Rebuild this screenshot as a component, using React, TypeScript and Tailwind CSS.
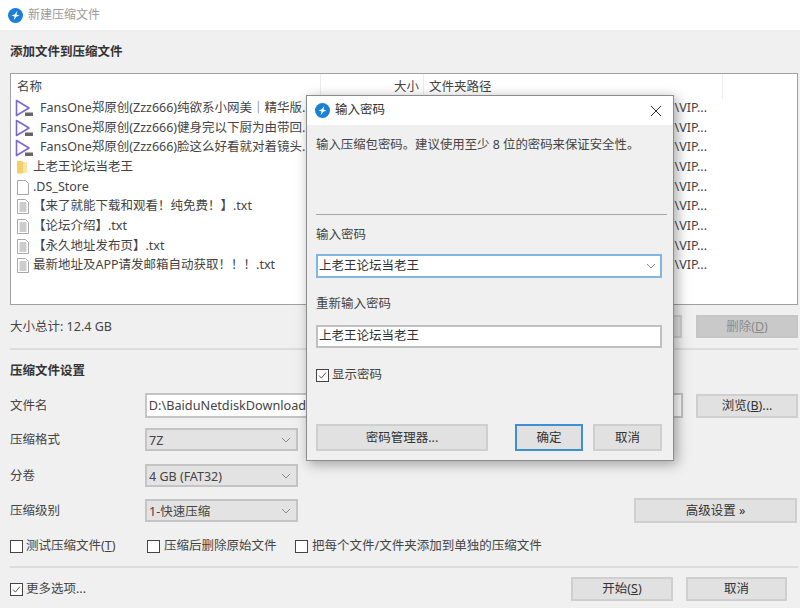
import type { ReactNode } from "react"

const files = [
  { type: "video", name: "FansOne郑原创(Zzz666)纯欲系小网美｜精华版." },
  { type: "video", name: "FansOne郑原创(Zzz666)健身完以下厨为由带回." },
  { type: "video", name: "FansOne郑原创(Zzz666)脸这么好看就对着镜头." },
  { type: "folder", name: "上老王论坛当老王" },
  { type: "blank", name: ".DS_Store" },
  { type: "text", name: "【来了就能下载和观看！纯免费！】.txt" },
  { type: "text", name: "【论坛介绍】.txt" },
  { type: "text", name: "【永久地址发布页】.txt" },
  { type: "text", name: "最新地址及APP请发邮箱自动获取！！！.txt" },
]

function Logo() {
  return (
    <svg width="15" height="15" viewBox="0 0 16 16" className="shrink-0">
      <circle cx="8" cy="8" r="8" fill="#1b7fd4" />
      <path d="M10 2.8 9 6.9 12.2 8 8.8 9.3 6 13.2 7 9.1 3.8 8 7.2 6.7Z" fill="#fff" />
    </svg>
  )
}

function FileIcon({ type }: { type: string }) {
  if (type === "video") {
    return (
      <svg width="18" height="18" viewBox="0 0 18 18" className="ml-[4px] mr-[7px] shrink-0">
        <path d="M1.5 1.5 14 9 1.5 16.5Z" fill="#fff" stroke="#7a68cf" strokeWidth="1.6" strokeLinejoin="round" />
        <rect x="10" y="13.5" width="8" height="3.5" fill="#666" />
      </svg>
    )
  }
  if (type === "folder") {
    return (
      <svg width="11" height="14" viewBox="0 0 11 14" className="ml-[6px] mr-[5px] shrink-0">
        <path d="M0 1h5l2 1.5h3V12l-5 1.5H0Z" fill="#f6cf6a" />
        <path d="M6 3h4v9l-4 1.2Z" fill="#fbe3a0" />
      </svg>
    )
  }
  return (
    <svg width="12" height="15" viewBox="0 0 12 15" className="ml-[6px] mr-[4px] shrink-0">
      <path d="M.5.5h8l3 3v11H.5Z" fill="#fff" stroke="#a8a8a8" />
      {type === "text" && <path d="M2.5 4h7M2.5 6h7M2.5 8h7M2.5 10h7M2.5 12h7" stroke="#9a9a9a" />}
    </svg>
  )
}

function Btn({ children, className }: { children?: ReactNode; className: string }) {
  return (
    <div className={`flex items-center justify-center border-2 border-[#cfcfcf] bg-[#e1e1e1] pt-[1px] text-[12.5px] text-[#333] ${className}`}>
      {children}
    </div>
  )
}

function Chevron() {
  return (
    <svg width="10" height="6" viewBox="0 0 10 6" className="shrink-0">
      <path d="M1 1l4 4 4-4" fill="none" stroke="#8a8a8a" />
    </svg>
  )
}

function Select({ value }: { value: string }) {
  return (
    <div className="flex h-[23px] w-[153px] items-center justify-between border-2 border-[#c4c4c4] bg-[#e3e3e3] pl-[2px] pr-[5px] text-[12.5px] text-[#444]">
      <span className="mt-[3px]">{value}</span>
      <Chevron />
    </div>
  )
}

function Box({ checked }: { checked?: boolean }) {
  return (
    <span className="flex h-[13px] w-[13px] shrink-0 items-center justify-center border border-[#444] bg-white">
      {checked && (
        <svg width="11" height="11" viewBox="0 0 11 11">
          <path d="M2 5.5l2.4 2.6L9 2.5" fill="none" stroke="#555" />
        </svg>
      )}
    </span>
  )
}

function PasswordDialog() {
  return (
    <div className="absolute left-[306px] top-[95px] flex h-[366px] w-[368px] flex-col border border-[#8c8c8c] bg-[#f0f0f0] shadow-[3px_3px_12px_rgba(0,0,0,0.35)]">
      <div className="flex h-[29px] shrink-0 items-center bg-white pl-[8px] pr-[11px]">
        <Logo />
        <span className="ml-[5px] flex-1 text-[12.5px] text-[#333]">输入密码</span>
        <svg width="12" height="12" viewBox="0 0 12 12">
          <path d="M1 1l10 10M11 1 1 11" stroke="#333" />
        </svg>
      </div>
      <div className="flex flex-1 flex-col pl-[9px] pr-[11px]">
        <p className="mt-[11px] h-[18px] text-[12.4px] leading-[18px] text-[#444]">输入压缩包密码。建议使用至少 8 位的密码来保证安全性。</p>
        <div className="mr-[-5px] mt-[60px] border-t border-[#a6a6a6]" />
        <p className="mt-[11px] h-[18px] text-[12.5px] leading-[18px] text-[#444]">输入密码</p>
        <div className="mt-[10px] flex h-[24px] items-center justify-between border-2 border-[#7fb6e2] bg-white pl-[1px] pr-[4px] text-[12.5px] text-[#333]">
          <span>上老王论坛当老王</span>
          <Chevron />
        </div>
        <p className="mt-[17px] h-[18px] text-[12.5px] leading-[18px] text-[#444]">重新输入密码</p>
        <div className="mt-[12px] flex h-[23px] items-center border-2 border-[#c0c0c0] bg-white pl-[1px] text-[12.5px] text-[#333]">
          上老王论坛当老王
        </div>
        <label className="mt-[20px] flex h-[14px] items-center gap-[3px] text-[12.5px] text-[#444]">
          <Box checked />
          显示密码
        </label>
        <div className="mt-[42px] flex">
          <Btn className="h-[27px] w-[172px]">密码管理器...</Btn>
          <Btn className="ml-[27px] h-[27px] w-[68px] !border-[#3f8fd6]">确定</Btn>
          <Btn className="ml-[10px] h-[27px] w-[69px]">取消</Btn>
        </div>
      </div>
    </div>
  )
}

export default function App() {
  return (
    <div className="relative flex h-[608px] w-[800px] flex-col overflow-hidden bg-[#f0f0f0] font-['Noto_Sans','Noto_Sans_CJK_SC',sans-serif] text-[12.5px] text-[#444]">
      <div className="flex h-[30px] shrink-0 items-center bg-white pl-[8px]">
        <Logo />
        <span className="ml-[5px] text-[12px] text-[#9a9a9a]">新建压缩文件</span>
      </div>

      <div className="flex flex-1 flex-col pl-[10px] pr-[2px]">
        <h2 className="mt-[13px] h-[18px] text-[12.5px] font-bold leading-[18px] text-[#333]">添加文件到压缩文件</h2>

        <div className="mt-[12px] h-[232px] border border-[#a0a0a0] bg-white">
          <div className="flex h-[24.5px] text-[12.5px] text-[#444]">
            <span className="w-[309px] pl-[6px] pt-[4px]">名称</span>
            <span className="w-[103px] border-l border-[#ececec] pr-[4px] pt-[4px] text-right">大小</span>
            <span className="w-[300px] border-x border-[#ececec] pl-[5px] pt-[4px]">文件夹路径</span>
          </div>
          {files.map((f) => (
            <div key={f.name} className="flex h-[19.7px] items-center text-[12.5px] text-[#444]">
              <div className="flex w-[295px] items-center whitespace-nowrap">
                <FileIcon type={f.type} />
                <span>{f.name}</span>
              </div>
              <span className="w-[401px] text-right">\VIP...</span>
            </div>
          ))}
        </div>

        <div className="mt-[10px] flex h-[23px] items-center">
          <span className="flex-1 pt-[1px]">大小总计: 12.4 GB</span>
          <Btn className="mr-[14px] h-[23px] w-[60px]" />
          <Btn className="h-[23px] w-[102px] !border-[#c6c6c6] !bg-[#c9c9c9] !text-[#8a8a8a]">
            <span>删除(<span className="underline">D</span>)</span>
          </Btn>
        </div>

        <div className="mt-[10px] border-t-2 border-[#dcdcdc]" />
        <h2 className="mt-[12px] h-[18px] text-[12.5px] font-bold leading-[18px] text-[#333]">压缩文件设置</h2>

        <div className="mt-[13px] flex h-[25px] items-center">
          <span className="w-[135px] pt-[2px]">文件名</span>
          <div className="flex h-[25px] w-[539px] items-center border-2 border-[#c4c4c4] bg-white pl-[2px] text-[12.7px] text-[#444]">
            D:\BaiduNetdiskDownload
          </div>
          <Btn className="ml-[13px] h-[24px] w-[102px]">
            <span>浏览(<span className="underline">B</span>)...</span>
          </Btn>
        </div>

        <div className="mt-[10px] flex items-center">
          <span className="w-[135px] pt-[2px]">压缩格式</span>
          <Select value="7Z" />
        </div>
        <div className="mt-[13px] flex items-center">
          <span className="w-[135px] pt-[2px]">分卷</span>
          <Select value="4 GB (FAT32)" />
        </div>
        <div className="mt-[11px] flex items-center">
          <span className="w-[135px] pt-[2px]">压缩级别</span>
          <Select value="1-快速压缩" />
          <Btn className="ml-[336px] h-[25px] w-[163px]">高级设置 »</Btn>
        </div>

        <div className="mt-[15px] flex h-[16px] items-center">
          <label className="flex w-[137px] items-center gap-[3px]">
            <Box />
            <span>测试压缩文件(<span className="underline">T</span>)</span>
          </label>
          <label className="flex w-[148px] items-center gap-[4px]">
            <Box />
            压缩后删除原始文件
          </label>
          <label className="flex items-center gap-[4px]">
            <Box />
            把每个文件/文件夹添加到单独的压缩文件
          </label>
        </div>

        <div className="mt-[12px] border-t-2 border-[#dcdcdc]" />

        <div className="mt-[9px] flex h-[24px] items-center">
          <label className="flex flex-1 items-center gap-[3px]">
            <Box checked />
            更多选项...
          </label>
          <Btn className="h-[24px] w-[102px]">
            <span>开始(<span className="underline">S</span>)</span>
          </Btn>
          <Btn className="ml-[13px] mr-[11px] h-[24px] w-[101px]">取消</Btn>
        </div>
      </div>

      <PasswordDialog />
    </div>
  )
}
